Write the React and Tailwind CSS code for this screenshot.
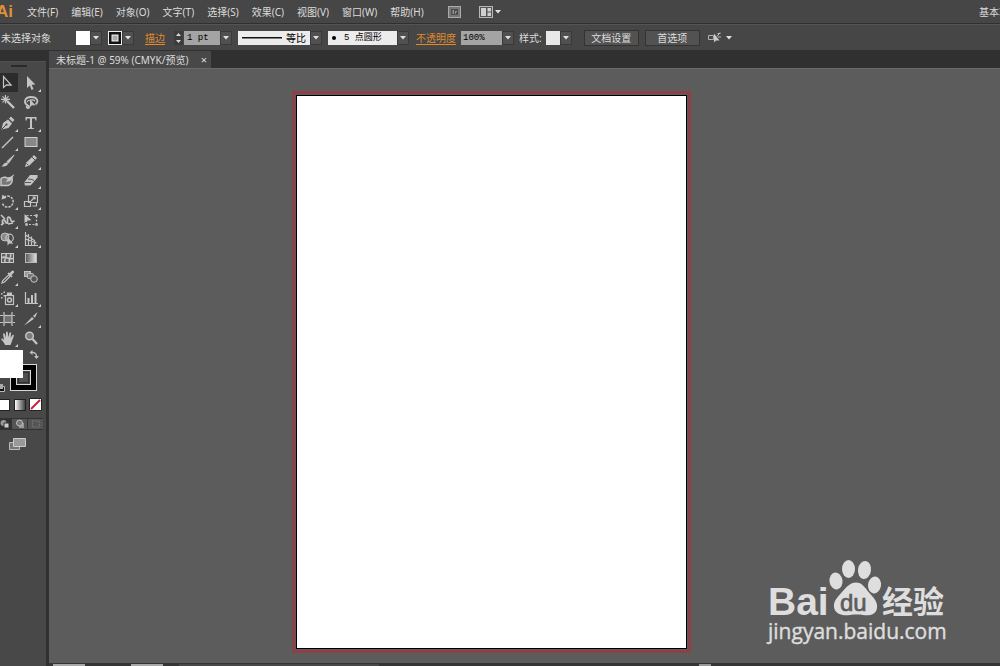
import React from "react";

const MENUS = ["文件(F)", "编辑(E)", "对象(O)", "文字(T)", "选择(S)", "效果(C)", "视图(V)", "窗口(W)", "帮助(H)"];

const line = { fill: "none", stroke: "#c4c4c4", strokeWidth: 1.2 };
const solid = { fill: "#c4c4c4" };

const ICONS = {
  select: <path d="M3.5 1.5v11l3-2.6 4.6.2z" {...line} />,
  direct: <path d="M4 1v12l2.8-2.6L8.5 15l2-.9L8.600 9.800l3.700-.3z" {...solid} />,
  wand: (
    <g {...line}>
      <path d="M7 7l7 7" strokeWidth="2.400" />
      <path d="M5.500 1v8.500M1 5.300h9M2.500 2.300l6 6M8.500 2.300l-6 6" />
    </g>
  ),
  lasso: (
    <g>
      <path d="M5 11.500C0 9 1.500 3 8 3s8 4.500 4.500 7.500M5 11.500c-2 .5-1.500 2.500 0 2.500s1.500-2 0-2.500" {...line} strokeWidth="1.800" />
      <path d="M7 5v8l2-1.800 3.500.3z" {...solid} />
      <path d="M4 8c1-2 6-3 8-1" {...line} />
    </g>
  ),
  pen: (
    <g>
      <path d="M1.500 14.500L3 8l5-3.500 4 4L8.500 13zM9 3.500L11 1.500l3.500 3.500-2 2z" {...solid} />
      <path d="M2 14l4-4" stroke="#454545" strokeWidth="1" />
      <circle cx="6.500" cy="9.500" r="1.100" fill="#454545" />
    </g>
  ),
  type: <path d="M2.500 2h11v3.500h-1L12 3.500H9v9.300l2 .4v.8H5v-.8l2-.4V3.500H4l-.5 2h-1z" {...solid} />,
  line: <path d="M2 14L13 3" {...line} strokeWidth="1.400" />,
  rect: <rect x="2" y="3.500" width="12" height="9" fill="#888" stroke="#d0d0d0" />,
  brush: (
    <g>
      <path d="M14 2L7 8.500l1.500 1.700z" stroke="#c4c4c4" {...solid} />
      <path d="M7.500 9.500c1.500 2-1 4.500-6.500 4 2.500-.8 2.500-4.500 6.500-4z" {...solid} />
    </g>
  ),
  pencil: (
    <g>
      <path d="M2 14l1.200-4.200L11 2l3 3-7.800 7.800z" {...solid} />
      <path d="M9 4l3 3M3.500 10.500l2 2" stroke="#505050" />
    </g>
  ),
  blob: (
    <g>
      <path d="M1 6.500c2-1.500 5-1.500 6-.5h5c1 3-.5 6.500-4 7.500H1z" fill="#777" stroke="#c8c8c8" strokeWidth="1.500" />
      <path d="M14.500 2l-6 4-3 4 5-1z" {...solid} />
    </g>
  ),
  eraser: (
    <g>
      <path d="M1.500 10L7 3h7.500v2.500l-6 7L7 13.500H1.800z" {...solid} />
      <path d="M5 7l4 .5 2 1M2 10.500h6" fill="none" stroke="#555" />
    </g>
  ),
  rotate: (
    <g>
      <path d="M4 4.500a5.500 5.500 0 1 1-1.500 6" {...line} strokeWidth="1.500" strokeDasharray="2.500 1" />
      <path d="M1.500 6.500l1-5 4 3.500z" {...solid} />
    </g>
  ),
  scale: (
    <g {...line}>
      <path d="M5.500 2.500h9v7h-9zM1.500 8.500h6v5h-6z" />
      <path d="M8 8l4-4M9.500 4H12v2.500M9.500 13h4v-3" />
    </g>
  ),
  width: <path d="M1 3l4 4M3.500 12C1 9 3.500 6 5 9s3 3 2.500-1S10 4.500 10.500 7s1.500 3 4 2M1 13l3-2M8 12l5-1" {...line} strokeWidth="1.700" />,
  transform: (
    <g>
      <rect x="3.500" y="3.500" width="10" height="9" {...line} strokeDasharray="2 1.500" />
      <path d="M1.500 2v9l3-2.500 4-.3z" {...solid} />
      <path d="M12.300 2.300h2.400v2.400h-2.400zM12.300 11.300h2.400v2.400h-2.400zM2.300 11.300h2.400v2.400H2.300z" {...solid} />
    </g>
  ),
  shape: (
    <g>
      <circle cx="5" cy="6" r="4" fill="#888" stroke="#c4c4c4" />
      <circle cx="9.500" cy="7" r="3.800" {...line} />
      <path d="M7.500 6v8.500l2-2 3.800.200z" {...solid} />
    </g>
  ),
  perspective: (
    <g {...line}>
      <path d="M2.500 1v13.500H15M5.500 3v11.500M8.500 5.500v9M11.500 9v5.500M2.500 4l9 5.500M2.500 8l11 4" />
    </g>
  ),
  mesh: (
    <g>
      <rect x="1.500" y="3.500" width="12" height="9" fill="#606060" stroke="#c8c8c8" />
      <path d="M1.500 8c4-3.500 8 3.500 12 0M5.500 3.500c3 3-3 6 0 9M10 3.500c3 3-3 6 0 9" {...line} strokeWidth="1.500" />
    </g>
  ),
  gradient: (
    <g>
      <defs>
        <linearGradient id="toolGrad">
          <stop offset="0" stopColor="#555" />
          <stop offset="1" stopColor="#e4e4e4" />
        </linearGradient>
      </defs>
      <rect x="2.500" y="3.500" width="11" height="9" fill="url(#toolGrad)" stroke="#b8b8b8" />
    </g>
  ),
  dropper: (
    <g>
      <path d="M2 14l.8-2.500L8.500 6 10 7.500 4.500 13z" {...line} />
      <path d="M7.500 4.500l4 4 1-1-1-1.500L14 3.500c.8-1-1-2.500-2-1.800L9.800 4 8.500 3.500z" {...solid} />
    </g>
  ),
  blend: (
    <g stroke="#c4c4c4">
      <rect x="1.500" y="2.500" width="6" height="5" fill="#999" />
      <rect x="4.500" y="4.500" width="6" height="5" rx="1" fill="#777" />
      <circle cx="11" cy="10" r="3.300" fill="#555" />
    </g>
  ),
  spray: (
    <g>
      <rect x="5.500" y="5.500" width="8" height="9" {...line} />
      <path d="M7 2.500h5v3H7zM1 3h1.500v1.500H1zM3.500 1.500H5V3H3.500zM3.500 5H5v1.500H3.500zM1 7h1.500v1.500H1z" {...solid} />
      <circle cx="9.500" cy="10" r="2" {...line} strokeWidth="1.500" />
    </g>
  ),
  graph: (
    <g>
      <path d="M2.500 2v11.500H15" {...line} />
      <path d="M4.500 8h2v5h-2zM8 5h2v8H8zM11.500 3h2v10h-2z" {...solid} />
    </g>
  ),
  artboard: (
    <g {...line}>
      <rect x="4" y="4.500" width="8" height="7" fill="#707070" />
      <path d="M4 1v3M12 1v3M4 12v3M12 12v3M0 4.500h3M13 4.500h2M0 11.500h3M13 11.500h2" />
    </g>
  ),
  slice: <path d="M1 14.500L9 6l2 1.800L5 12zM10 5l4.500-4L12 6.800z" {...solid} />,
  hand: (
    <path
      d="M5 15c-.5-2-2.500-4-4-6 .8-1.300 2-.3 3 .8L3 4c.5-1 1.500-.8 1.800 0L6 7.500 6 2.300c.5-1 1.600-1 1.800 0l.4 5L9.500 2.800c.6-.9 1.600-.5 1.600.4L10.500 8l2-3c.8-.7 1.600 0 1.300.9L12 11l-1.500 4z"
      {...solid}
    />
  ),
  zoom: (
    <g>
      <circle cx="6.500" cy="6" r="3.800" fill="#7c7c7c" stroke="#c4c4c4" strokeWidth="1.500" />
      <path d="M9.500 9l4.500 5" stroke="#c4c4c4" strokeWidth="2.200" />
    </g>
  ),
};

// Each entry: icon, label, whether the tool hides further tools.
const TOOL_GROUPS = [
  [
    [["select", "选择工具", false], ["direct", "直接选择工具", true]],
    [["wand", "魔棒工具", false], ["lasso", "套索工具", false]],
  ],
  [
    [["pen", "钢笔工具", true], ["type", "文字工具", true]],
    [["line", "直线段工具", true], ["rect", "矩形工具", true]],
    [["brush", "画笔工具", false], ["pencil", "铅笔工具", true]],
    [["blob", "斑点画笔工具", false], ["eraser", "橡皮擦工具", true]],
  ],
  [
    [["rotate", "旋转工具", true], ["scale", "比例缩放工具", true]],
    [["width", "宽度工具", true], ["transform", "自由变换工具", false]],
    [["shape", "形状生成器工具", true], ["perspective", "透视网格工具", true]],
    [["mesh", "网格工具", false], ["gradient", "渐变工具", false]],
    [["dropper", "吸管工具", true], ["blend", "混合工具", false]],
  ],
  [[["spray", "符号喷枪工具", true], ["graph", "柱形图工具", true]]],
  [
    [["artboard", "画板工具", false], ["slice", "切片工具", true]],
    [["hand", "抓手工具", true], ["zoom", "缩放工具", false]],
  ],
];

function Tool({ tool, active }) {
  const [icon, label, more] = tool;
  return (
    <button
      aria-label={label}
      title={label}
      className={`relative flex h-[19px] w-[18px] items-center ${active ? "bg-[#2c2c2c]" : ""}`}
    >
      <svg viewBox="0 0 16 16" className="size-4 shrink-0">{ICONS[icon]}</svg>
      {more && (
        <svg viewBox="0 0 3 3" className="absolute right-0 bottom-0 size-[3px]">
          <path d="M3 0v3H0z" fill="#d0d0d0" />
        </svg>
      )}
    </button>
  );
}

function Arrow() {
  return (
    <svg viewBox="0 0 6 4" className="h-1 w-1.5 shrink-0">
      <path d="M0 0h6L3 3.500z" fill="#e0e0e0" />
    </svg>
  );
}

function ArrowButton({ label }) {
  return (
    <button aria-label={label} className="flex h-3.5 w-3 shrink-0 items-center justify-center border border-[#3a3a3a] bg-[#505050]">
      <Arrow />
    </button>
  );
}

function ArrowBox() {
  return (
    <span className="pointer-events-none flex h-3.5 w-3 shrink-0 items-center justify-center border border-[#3a3a3a] bg-[#505050]">
      <Arrow />
    </span>
  );
}

function MenuBar() {
  return (
    <header className="flex h-6 shrink-0 items-center border-b border-[#303030] bg-[#464646]">
      <span className="-ml-1 w-[31px] shrink-0 font-['Liberation_Sans'] text-[17px] leading-6 font-bold text-[#dd9238]">Ai</span>
      <nav className="flex shrink-0 gap-[13px]">
        {MENUS.map((m) => (
          <button key={m} className="whitespace-nowrap">{m}</button>
        ))}
      </nav>
      <button aria-label="Bridge" className="ml-6 shrink-0">
        <svg viewBox="0 0 13 12" className="h-3 w-[13px]">
          <rect x=".5" y=".5" width="12" height="11" fill="#777" stroke="#aaa" />
          <path d="M3 3h7v6H3z" fill="#4c4c4c" />
          <path d="M4.500 4h1.500v4H4.500zM7 5h2v1H8v2H7z" fill="#909090" />
        </svg>
      </button>
      <button aria-label="排列文档" className="ml-[18px] flex shrink-0 items-center gap-0.5">
        <svg viewBox="0 0 14 12" className="h-3 w-3.5">
          <rect x=".5" y=".5" width="13" height="11" fill="#555" stroke="#b8b8b8" />
          <path d="M2 2h5v8H2zM8.500 2H12v3.500H8.500zM8.500 6.500H12V10H8.500z" fill="#d0d0d0" />
        </svg>
        <Arrow />
      </button>
      <div className="flex flex-1 justify-end overflow-hidden">
        <button className="-mr-5 w-[41px] shrink-0 text-left whitespace-nowrap">基本功能</button>
      </div>
    </header>
  );
}

function ControlBar() {
  return (
    <div className="flex h-[27px] shrink-0 items-center border-t border-b border-t-[#545454] border-b-[#303030] bg-[#464646]">
      <span className="ml-px w-[75px] shrink-0 whitespace-nowrap">未选择对象</span>
      <button aria-label="填色" className="size-3.5 shrink-0 bg-white" />
      <ArrowButton label="填色选项" />
      <button aria-label="描边颜色" className="ml-1.5 shrink-0">
        <svg viewBox="0 0 14 14" className="size-3.5">
          <rect x=".5" y=".5" width="13" height="13" fill="#111" stroke="#eee" />
          <rect x="4" y="4" width="6" height="6" fill="#aaa" stroke="#f4f4f4" />
        </svg>
      </button>
      <ArrowButton label="描边颜色选项" />
      <label htmlFor="stroke" className="ml-[11px] shrink-0 text-[#e08a2c] underline underline-offset-2">描边</label>
      <button aria-label="调整粗细" className="ml-2 flex w-[11px] shrink-0 justify-center">
        <svg viewBox="0 0 9 14" className="h-3.5 w-[9px]">
          <path d="M0 0h9v14H0z" fill="#3c3c3c" />
          <path d="M2 5l2.500-3L7 5zM2 9l2.500 3L7 9z" fill="#d8d8d8" />
        </svg>
      </button>
      <input id="stroke" defaultValue="1 pt" className="h-3.5 w-9 shrink-0 bg-[#a4a4a4] px-[3px] font-['Liberation_Mono'] text-[9px] text-black" />
      <ArrowButton label="粗细选项" />
      <label className="ml-1.5 flex shrink-0 items-center">
        <span className="flex h-3.5 w-[72px] items-center justify-between bg-[#ececec] px-1">
          <svg viewBox="0 0 40 2" className="h-0.5 w-10"><path d="M0 0h40v1.500H0z" fill="#111" /></svg>
          <select aria-label="宽度配置" className="w-5 appearance-none text-black"><option>等比</option></select>
        </span>
        <ArrowBox />
      </label>
      <label className="ml-1.5 flex shrink-0 items-center">
        <span className="flex h-3.5 w-[69px] items-center gap-2 bg-[#ececec] px-1">
          <span className="size-1 rounded-full bg-black" />
          <select aria-label="画笔定义" className="flex-1 appearance-none font-['Liberation_Mono','Noto_Sans_CJK_SC',monospace] text-[9px] text-black"><option>5 点圆形</option></select>
        </span>
        <ArrowBox />
      </label>
      <label htmlFor="opacity" className="ml-[7px] shrink-0 text-[#e08a2c] underline underline-offset-2">不透明度</label>
      <input id="opacity" defaultValue="100%" className="ml-[5px] h-3.5 w-[41px] shrink-0 bg-[#a4a4a4] px-0.5 font-['Liberation_Mono'] text-[9px] text-black" />
      <ArrowButton label="不透明度选项" />
      <span className="ml-[5px] shrink-0">样式:</span>
      <button aria-label="图形样式" className="ml-1 size-3.5 shrink-0 bg-[#e8e8e8]" />
      <ArrowButton label="图形样式选项" />
      <button className="ml-3 h-4 w-[55px] shrink-0 border border-[#333] bg-[#525252]">文档设置</button>
      <button className="ml-1.5 h-4 w-[55px] shrink-0 border border-[#333] bg-[#525252]">首选项</button>
      <button aria-label="选择类似的对象" className="ml-2 flex shrink-0 items-center gap-1">
        <svg viewBox="0 0 14 12" className="h-3 w-3.5">
          <path d="M.5 3.500h5v4h-5zM9.500 1.500h3M10 5h3" fill="none" stroke="#b0b0b0" />
          <path d="M6 1.500v9l2-2 3.500 0z" fill="#c8c8c8" />
          <path d="M12 .5L9 4.500" stroke="#c8c8c8" />
        </svg>
        <Arrow />
      </button>
    </div>
  );
}

function ToolPanel() {
  return (
    <aside className="w-[49px] shrink-0 border-r-[3px] border-[#303030] bg-[#484848]">
      <div className="h-2.5 bg-[#303030]" />
      <div className="flex h-3 items-start border-t border-[#505050] pt-[3px] pl-[11px]">
        <span className="h-0.5 w-4 bg-[#2a2a2a]" />
      </div>
      <div className="flex flex-col gap-0.5">
        {TOOL_GROUPS.map((rows, g) => (
          <div key={g}>
            {rows.map((row, r) => (
              <div key={r} className="flex gap-[5px]">
                {row.map((t) => <Tool key={t[0]} tool={t} active={t[0] === "select"} />)}
              </div>
            ))}
          </div>
        ))}
      </div>
      <div className="relative mt-[3px] h-[42px]">
        <button aria-label="描边" className="absolute top-3.5 left-2.5">
          <svg viewBox="0 0 27 27" className="size-[27px]">
            <rect x=".5" y=".5" width="26" height="26" fill="#000" stroke="#d8d8d8" />
            <rect x="6.500" y="6.500" width="14" height="14" fill="#484848" stroke="#d8d8d8" />
            <rect x="8.500" y="8.500" width="10" height="10" fill="#505050" stroke="#303030" />
          </svg>
        </button>
        <button aria-label="填色" className="absolute top-0 left-0 h-7 w-[23px] bg-white" />
        <button aria-label="互换填色和描边" className="absolute top-0 left-[29px]">
          <svg viewBox="0 0 10 10" className="size-2.5">
            <path d="M2.500 2.500c3-.5 5 1 5 4" fill="none" stroke="#c4c4c4" strokeWidth="1.200" />
            <path d="M3.500 0v5L.5 2.500zM5 6h5L7.500 9z" fill="#c4c4c4" />
          </svg>
        </button>
        <button aria-label="默认填色和描边" className="absolute bottom-0 left-0">
          <svg viewBox="0 0 6 8" className="h-2 w-1.5">
            <path d="M0 2.500h4.500v5H0" fill="#111" stroke="#bbb" />
            <path d="M0 0h3v5H0z" fill="#aaa" />
          </svg>
        </button>
      </div>
      <div className="mt-1.5 flex items-center justify-between pr-1">
        <button aria-label="颜色" className="h-3 w-2.5 border border-l-0 border-[#222] bg-white" />
        <button aria-label="渐变" className="size-3 border border-[#222] bg-linear-to-r from-white to-[#444]" />
        <button aria-label="无">
          <svg viewBox="0 0 13 13" className="size-[13px]">
            <path d="M.5.5h12v12H.5z" fill="#fff" stroke="#222" />
            <path d="M2 11L11 2" stroke="#cc2238" strokeWidth="2" />
          </svg>
        </button>
      </div>
      <div className="mt-[7px] flex h-3 w-[43px] divide-x divide-[#333] border-y border-[#333]">
        <button aria-label="正常绘图" className="flex w-3 items-center bg-[#303030]">
          <svg viewBox="0 0 10 10" className="size-2.5"><circle cx="3.500" cy="4" r="3" fill="#999" /><path d="M4 4h5v5H4z" fill="#ccc" stroke="#333" /></svg>
        </button>
        <button aria-label="背面绘图" className="flex flex-1 items-center justify-center bg-[#555]">
          <svg viewBox="0 0 10 10" className="size-2.5"><path d="M4 4h5v5H4z" fill="#999" /><circle cx="4.500" cy="4" r="3" fill="#777" stroke="#c0c0c0" /></svg>
        </button>
        <button aria-label="内部绘图" className="flex flex-1 items-center justify-center bg-[#555]">
          <svg viewBox="0 0 10 10" className="size-2.5"><path d="M1.500 2h7v6h-7z" fill="none" stroke="#777" strokeDasharray="1.500 1" /></svg>
        </button>
      </div>
      <button aria-label="更改屏幕模式" className="mt-[7px] ml-2 block">
        <svg viewBox="0 0 19 14" className="h-3.5 w-[19px]">
          <path d="M1.500 5.500h10v7h-10z" fill="#777" stroke="#bbb" />
          <path d="M5.500 1.500h12v8h-12z" fill="#999" stroke="#ccc" />
        </svg>
      </button>
    </aside>
  );
}

function Watermark() {
  return (
    <svg viewBox="0 0 184 86" className="absolute right-[50px] bottom-[17px] h-[86px] w-[184px]" fill="#dedede">
      <text x="2" y="55" fontSize="39" fontFamily="Liberation Sans, sans-serif" fontWeight="700">Bai</text>
      <text x="116" y="53" fontSize="31" fontFamily="Noto Sans CJK SC, sans-serif" fontWeight="700">经验</text>
      <ellipse cx="70" cy="21" rx="6.500" ry="8.500" transform="rotate(-8 70 21)" />
      <ellipse cx="82.500" cy="9" rx="6.500" ry="9" />
      <ellipse cx="98.500" cy="10" rx="6.500" ry="9" transform="rotate(8 98.500 10)" />
      <ellipse cx="108.500" cy="25" rx="6.500" ry="8.500" transform="rotate(8 108.500 25)" />
      <path d="M90 22.500c6 0 9 5 13 10 4 4.500 9 9 8 15.500-1 7-8 8-14 7-4-.6-9-.6-13 0-7 1-15-.5-16-8-.7-6 4-10.500 8-15 4.500-5 8-9.500 14-9.500z" />
      <text x="74" y="51" fontSize="24" fontFamily="Liberation Sans, sans-serif" fill="#5c5c5c" stroke="#5c5c5c" strokeWidth=".7">du</text>
      <text x="2" y="79" fontSize="21" fontFamily="Open Sans, sans-serif" stroke="#dedede" strokeWidth=".4">jingyan.baidu.com</text>
    </svg>
  );
}

export default function App() {
  return (
    <div className="flex h-screen flex-col overflow-hidden bg-[#5c5c5c] font-['Noto_Sans','Noto_Sans_CJK_SC',sans-serif] text-[10px] leading-3 text-[#dcdcdc]">
      <MenuBar />
      <ControlBar />
      <div className="flex min-h-0 flex-1">
        <ToolPanel />
        <main className="flex min-w-0 flex-1 flex-col">
          <div className="flex h-[17px] shrink-0 bg-[#303030]">
            <div className="flex w-[162px] items-center justify-between bg-[#484848] pr-1 pl-[7px]">
              <span className="whitespace-nowrap">未标题-1 @ 59% (CMYK/预览)</span>
              <button aria-label="关闭" className="text-[11px]">×</button>
            </div>
          </div>
          <section className="relative min-h-0 flex-1 overflow-hidden border-t border-[#6a6a6a]">
            <div className="mt-[22px] ml-[243px] w-fit border-[3px] border-[#8c4048] p-px">
              <div className="h-[554px] w-[391px] border border-black bg-white" />
            </div>
            <Watermark />
          </section>
          <footer className="flex h-[3px] shrink-0 items-end bg-[#353535] pl-1">
            <span className="h-0.5 w-8 bg-[#a8a8a8]" />
            <span className="ml-[46px] h-0.5 w-8 bg-[#a8a8a8]" />
            <span className="ml-4 h-0.5 w-[200px] bg-[#484848]" />
            <span className="ml-80 h-0.5 w-3 bg-[#999]" />
          </footer>
        </main>
      </div>
    </div>
  );
}
